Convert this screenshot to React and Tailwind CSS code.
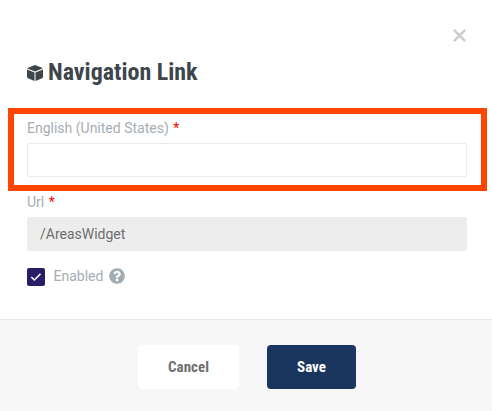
import React, { useState } from 'react';
import { FaQuestionCircle } from 'react-icons/fa';

const FieldLabel = ({ children }) => (
  <label className="block h-5 text-sm leading-5 text-[#a6adb4]">
    {children} <span className="ml-px text-[#ff0000]">*</span>
  </label>
);

const CubeIcon = () => (
  <svg viewBox="0 0 16 16" className="w-4 h-4" fill="#3e464c">
    <path d="M8 0 L14.4 2.4 Q15.3 2.8 15.6 3.5 L8 6.6 L0.4 3.5 Q0.7 2.8 1.6 2.4 Z" />
    <path d="M0 4.5 L7.5 7.5 V16 L0.9 13.2 Q0 12.8 0 11.8 Z" />
    <path d="M16 4.5 L8.5 7.5 V16 L15.1 13.2 Q16 12.8 16 11.8 Z" />
  </svg>
);

const App = () => {
  const [title, setTitle] = useState('');
  const [enabled, setEnabled] = useState(true);

  return (
    <div className="w-full h-[411px] flex flex-col bg-white font-['Roboto',sans-serif] overflow-hidden">
      <div className="flex justify-end pt-[29px] pr-[26px]">
        <button type="button" aria-label="Close" className="w-[13px] h-[13px]">
          <svg viewBox="0 0 13 13" className="w-[13px] h-[13px]" stroke="#cccccc" strokeWidth="2.4" fill="none">
            <path d="M0.9 0.9 L12.1 12.1 M12.1 0.9 L0.9 12.1" />
          </svg>
        </button>
      </div>

      <div className="flex items-center h-8 mt-[15px] pl-[27px] gap-[5px]">
        <CubeIcon />
        <h2 className="h-8 text-2xl leading-[30px] font-bold text-[#3e464c] whitespace-nowrap [font-stretch:75%]">Navigation Link</h2>
      </div>

      <div className="mt-[19px] ml-2 mr-[5px] h-[83px] border-6 border-[#ff4500] pl-[13px] pr-[14px] pt-1">
        <FieldLabel>English (United States)</FieldLabel>
        <input
          type="text"
          value={title}
          onChange={(e) => setTitle(e.target.value)}
          className="block w-full h-[34px] mt-[5px] px-3 border border-[#ebebeb] rounded-[2px] text-sm focus:outline-none"
        />
      </div>

      <div className="mt-[1px] pl-[27px] pr-[25px]">
        <FieldLabel>Url</FieldLabel>
        <div className="h-[34px] mt-[5px] px-[13px] flex items-center rounded-[2px] bg-[#ededed] text-sm text-[#6f6f6f]">
          /AreasWidget
        </div>
      </div>

      <div className="flex items-center h-[18px] mt-[17px] pl-[27px]">
        <button
          type="button"
          onClick={() => setEnabled(!enabled)}
          className="w-[18px] h-[18px] rounded-[2px] bg-[#2a1d68]"
        >
          {enabled && (
            <svg viewBox="0 0 18 18" className="w-[18px] h-[18px]" fill="none" stroke="#fff" strokeWidth="1.5">
              <path d="M4.3 9 L7.3 12 L13.5 5.9" />
            </svg>
          )}
        </button>
        <span className="ml-[8.5px] mb-0.5 text-sm leading-4 text-[#a6adb4]">Enabled</span>
        <FaQuestionCircle className="ml-1.5 mb-0.5 w-4 h-4 text-[#a2aab3]" />
      </div>

      <div className="mt-[33px] flex-1 border-t border-[#e9e9e9] bg-[#f7f7f7] flex items-start gap-7 pt-[25px] pl-[138px] text-[15px] font-bold">
        <button type="button" className="w-[101px] h-11 rounded-[4px] bg-white text-[#6f6f6f] [font-stretch:75%]">
          Cancel
        </button>
        <button type="button" className="w-[89px] h-11 rounded-[4px] bg-[#1a355e] text-white [font-stretch:75%]">
          Save
        </button>
      </div>
    </div>
  );
};

export default App;
